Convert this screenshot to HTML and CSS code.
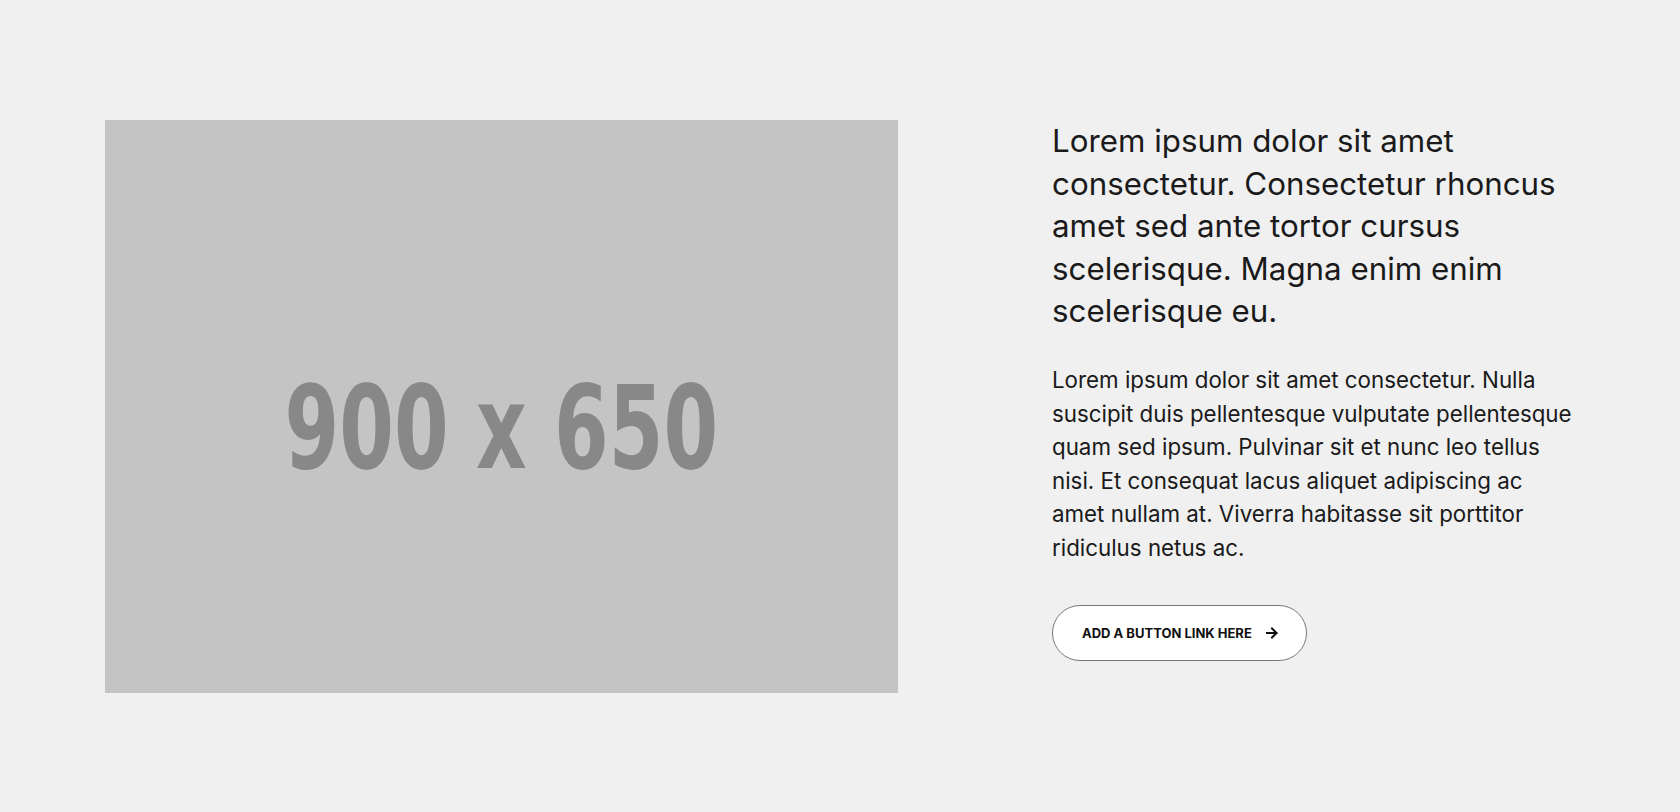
FILE: index.html
```html
<!DOCTYPE html>
<html lang="en">
<head>
<meta charset="utf-8">
<title>Feature</title>
<link rel="stylesheet" href="styles.css">
</head>
<body>
<section class="feature">
  <div class="feature__media">
    <span class="feature__placeholder">900 x 650</span>
  </div>
  <div class="feature__content">
    <h2 class="feature__title">Lorem ipsum dolor sit amet consectetur. Consectetur rhoncus amet sed ante tortor cursus scelerisque. Magna enim enim scelerisque eu.</h2>
    <p class="feature__text">Lorem ipsum dolor sit amet consectetur. Nulla suscipit duis pellentesque vulputate pellentesque quam sed ipsum. Pulvinar sit et nunc leo tellus nisi. Et consequat lacus aliquet adipiscing ac amet nullam at. Viverra habitasse sit porttitor ridiculus netus ac.</p>
    <a class="feature__button" href="#">
      <span>ADD A BUTTON LINK HERE</span>
      <svg class="feature__arrow" width="12" height="12" viewBox="0 0 12 12" aria-hidden="true">
        <path d="M1 6h9.5M6 1.5L10.5 6 6 10.5" fill="none" stroke="#111" stroke-width="2" stroke-linecap="square"/>
      </svg>
    </a>
  </div>
</section>
</body>
</html>
```

FILE: styles.css
```css
html, body {
  margin: 0;
  padding: 0;
}
body {
  background: #f0f0f0;
  color: #1a1a1a;
  font-family: Inter, "Noto Sans", sans-serif;
  height: 812px;
}
.feature {
  display: flex;
  align-items: flex-start;
  gap: 154px;
  padding: 120px 105px 0 105px;
}
.feature__media {
  flex: 0 0 793px;
  height: 573px;
  background: #c4c4c4;
  display: flex;
  align-items: center;
  justify-content: center;
}
.feature__placeholder {
  display: inline-block;
  font-family: "DejaVu Sans Condensed", "DejaVu Sans", sans-serif;
  font-weight: 700;
  font-size: 115px;
  line-height: 1.164;
  color: #888888;
  white-space: nowrap;
  transform: translateY(22px) scaleX(0.76);
}
.feature__content {
  flex: 0 0 523px;
  display: flex;
  flex-direction: column;
  align-items: flex-start;
}
.feature__title {
  margin: 0;
  font-weight: 400;
  font-size: 31.3px;
  line-height: 42.6px;
  color: #1a1a1a;
}
.feature__text {
  margin: 30px 0 0 0;
  font-size: 22.34px;
  line-height: 33.6px;
  color: #1a1a1a;
}
.feature__button {
  display: flex;
  align-items: center;
  gap: 14px;
  margin-top: 40px;
  height: 56px;
  box-sizing: border-box;
  padding: 0 28px 0 29px;
  border: 1px solid #777;
  border-radius: 28px;
  background: #fff;
  color: #111;
  text-decoration: none;
  font-weight: 700;
  font-size: 13px;
  letter-spacing: 0;
}
.feature__arrow {
  display: block;
}
```
